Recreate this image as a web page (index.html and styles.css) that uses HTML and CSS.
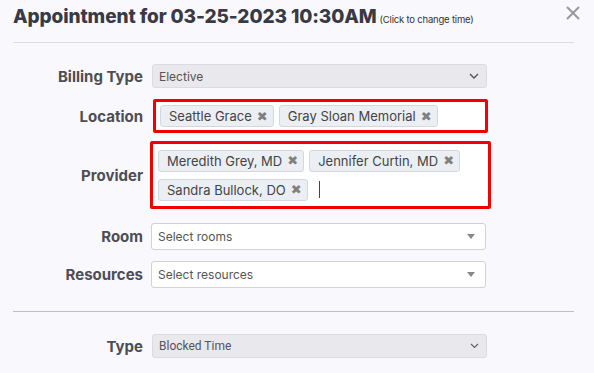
FILE: index.html
```html
<!DOCTYPE html>
<html lang="en">
<head>
    <meta charset="UTF-8">
    <meta name="viewport" content="width=device-width, initial-scale=1.0">
    <title>Appointment</title>
    <link rel="stylesheet" href="styles.css">
</head>
<body>
    <div class="modal">
        <!-- header -->
        <div class="modal-head">
            <h2 class="title">Appointment for 03-25-2023 10:30AM<small>(Click to change time)</small></h2>
            <svg class="close" width="14" height="14" viewBox="0 0 14 14"><path d="M1 1l12 12M13 1L1 13" stroke="#999" stroke-width="2"/></svg>
        </div>
        <div class="rule"></div>

        <!-- form -->
        <div class="form">
            <div class="row row-billing">
                <label>Billing Type</label>
                <div class="select grey">
                    <span>Elective</span>
                    <svg class="chev" width="10" height="6" viewBox="0 0 10 6"><path d="M1 1l4 4 4-4" fill="none" stroke="#555" stroke-width="1.4"/></svg>
                </div>
            </div>
            <div class="row row-location">
                <label>Location</label>
                <div class="tags marked loc">
                    <span class="tag">Seattle Grace <b>&#10006;</b></span>
                    <span class="tag">Gray Sloan Memorial <b>&#10006;</b></span>
                </div>
            </div>
            <div class="row row-provider">
                <label>Provider</label>
                <div class="tags marked prov">
                    <span class="tag">Meredith Grey, MD <b>&#10006;</b></span>
                    <span class="tag">Jennifer Curtin, MD <b>&#10006;</b></span>
                    <span class="tag">Sandra Bullock, DO <b>&#10006;</b></span>
                    <span class="caret"></span>
                </div>
            </div>
            <div class="row row-room">
                <label>Room</label>
                <div class="select white">
                    <span>Select rooms</span>
                    <i class="tri"></i>
                </div>
            </div>
            <div class="row row-res">
                <label>Resources</label>
                <div class="select white">
                    <span>Select resources</span>
                    <i class="tri"></i>
                </div>
            </div>
        </div>
        <div class="rule rule-mid"></div>
        <div class="form">
            <div class="row row-type">
                <label>Type</label>
                <div class="select grey type">
                    <span>Blocked Time</span>
                    <svg class="chev" width="9" height="6" viewBox="0 0 9 6"><path d="M1 1l3.5 3.5 3.5-3.5" fill="none" stroke="#666" stroke-width="1.2"/></svg>
                </div>
            </div>
        </div>
    </div>
</body>
</html>
```

FILE: styles.css
```css
*{
    padding: 0;
    margin: 0;
    box-sizing: border-box;
}
html, body{
    width: 100%;
    height: 100%;
}
body{
    background: #f9f9fd;
    font-family: Inter, "Noto Sans", sans-serif;
    color: #444;
    overflow: hidden;
}

/* header */
.modal-head{
    height: 42px;
    padding: 0 14px 0 13px;
    display: flex;
    justify-content: space-between;
    align-items: flex-start;
}
.title{
    font-size: 19px;
    font-weight: 800;
    color: #3a3a44;
    margin-top: 5px;
    letter-spacing: -0.1px;
}
.title small{
    font-size: 9.5px;
    font-weight: 400;
    margin-left: 3px;
    color: #333;
    letter-spacing: -0.2px;
}
.close{
    margin-top: 6px;
}
.rule{
    height: 1px;
    background: #dcdce2;
    margin: 0 20px 0 13px;
}
.rule-mid{
    background: #bdbdcc;
    margin-top: 23px;
}

/* rows */
.row{
    display: grid;
    grid-template-columns: 143px 1fr;
    column-gap: 9px;
    align-items: center;
    padding-right: 108px;
}
.row label{
    text-align: right;
    font-size: 15px;
    font-weight: 700;
    color: #4d4d55;
}
.row-billing{ margin-top: 21px; }
.row-location{ margin-top: 11px; }
.row-provider{ margin-top: 8px; }
.row-room{ margin-top: 14px; }
.row-res{ margin-top: 11px; }
.row-type{ margin-top: 22px; }

.select{
    height: 24px;
    border-radius: 3px;
    border: 1px solid #dcdce0;
    display: flex;
    align-items: center;
    justify-content: space-between;
    padding: 0 7px 0 6px;
    font-size: 12px;
    color: #555;
}
.grey{
    background: #e8e8ed;
    margin-right: -1px;
}
.white{
    height: 27px;
    background: #fff;
    border-color: #d2d2d6;
    margin-left: -1px;
    padding-right: 10px;
}
.type{
    font-family: Roboto, sans-serif;
    font-size: 12px;
    color: #555;
}
.tri{
    width: 0;
    height: 0;
    border-left: 4px solid transparent;
    border-right: 4px solid transparent;
    border-top: 5px solid #888;
}

/* multi-select with red highlight */
.tags{
    background: #fff;
    display: flex;
    flex-wrap: wrap;
    align-items: center;
    gap: 7px 5px;
}
.marked{
    border: 3px solid #f20000;
    border-radius: 2px;
}
.loc{
    height: 34px;
    margin: 0 -2px 0 1px;
    padding: 0 4px;
}
.prov{
    height: 68px;
    margin: 0 -5px 0 -2px;
    padding: 3px 5px;
    align-content: center;
}
.tag{
    height: 22px;
    display: inline-flex;
    align-items: center;
    padding: 0 5px 0 8px;
    background: #ebeff4;
    border: 1px solid #d3d8de;
    border-radius: 3px;
    font-size: 13px;
    color: #444;
}
.tag b{
    font-family: "DejaVu Sans", sans-serif;
    font-size: 13px;
    line-height: 1;
    color: #808080;
    margin-left: 5px;
}
.caret{
    width: 1px;
    height: 17px;
    background: #444;
    margin-left: 6px;
}
```
